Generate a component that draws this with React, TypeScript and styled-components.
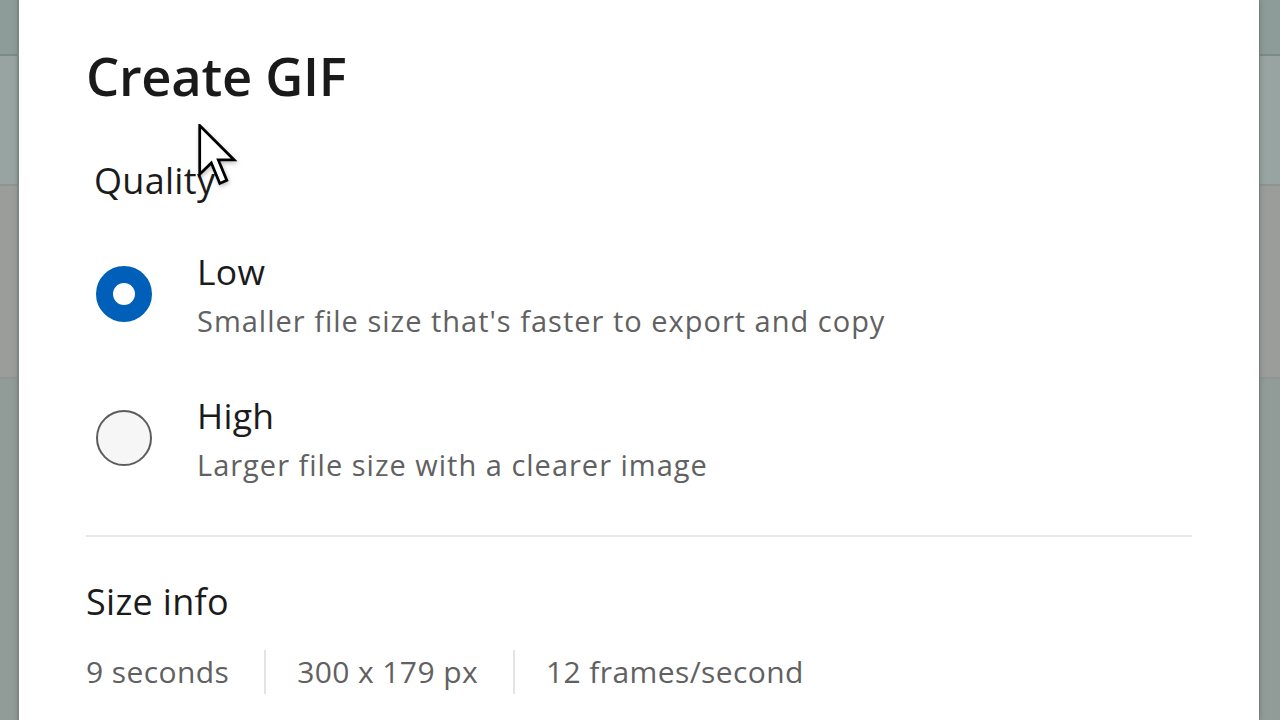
import React from "react";
import styled, { createGlobalStyle } from "styled-components";

const Global = createGlobalStyle`
  html, body { margin: 0; padding: 0; }
  body {
    width: 1280px;
    height: 720px;
    overflow: hidden;
    font-family: "Open Sans", "Noto Sans", "Liberation Sans", sans-serif;
  }
`;

const Page = styled.div`
  position: relative;
  width: 1280px;
  height: 720px;
  display: flex;
  padding: 0 21px 0 19px;
  box-sizing: border-box;
  background: linear-gradient(
    to bottom,
    #8e9c99 0px,
    #8e9c99 54px,
    #7f8a88 54px,
    #7f8a88 56px,
    #97a4a1 56px,
    #97a4a1 184px,
    #8c9593 184px,
    #8c9593 186px,
    #9b9d9b 186px,
    #9b9d9b 377px,
    #8f9593 377px,
    #8f9593 379px,
    #919b98 379px,
    #919b98 720px
  );
`;

const Dialog = styled.section`
  flex: 1;
  background: #ffffff;
  box-shadow: -2px 0 0 #7d8886, 1px 0 0 #7a7f7e, 0 0 6px rgba(0, 0, 0, 0.25);
  padding: 38px 67px 0 67px;
  display: flex;
  flex-direction: column;
  color: #1b1b1b;
`;

const Title = styled.h1`
  margin: 0;
  font-size: 52.5px;
  font-weight: 600;
  line-height: 76px;
  letter-spacing: -0.3px;
  color: #1a1a1a;
`;

const SectionLabel = styled.div<{ $indent?: number }>`
  font-size: 36px;
  font-weight: 400;
  line-height: 48px;
  letter-spacing: 0.3px;
  padding-left: ${(p) => p.$indent ?? 0}px;
  color: #1b1b1b;
`;

const QualityLabel = styled(SectionLabel)`
  margin-top: 43px;
`;

const Options = styled.div`
  display: flex;
  flex-direction: column;
  gap: 50px;
  margin-top: 42px;
`;

const Option = styled.label`
  display: flex;
  align-items: center;
  gap: 45px;
  padding-left: 10px;
`;

const Radio = styled.span<{ $checked?: boolean }>`
  flex: none;
  width: 56px;
  height: 56px;
  border-radius: 50%;
  box-sizing: border-box;
  ${(p) =>
    p.$checked
      ? `background: #ffffff; border: 17px solid #005fb8;`
      : `background: #f6f6f6; border: 2px solid #5c5c5c;`}
`;

const OptionText = styled.div`
  display: flex;
  flex-direction: column;
`;

const OptionTitle = styled.div`
  font-size: 35.5px;
  line-height: 48px;
  letter-spacing: 0.3px;
  color: #1b1b1b;
`;

const OptionDesc = styled.div`
  font-size: 29px;
  line-height: 40px;
  letter-spacing: 1px;
  color: #616161;
  margin-top: 6px;
`;

const Divider = styled.hr`
  margin: 50px 0 0 0;
  border: none;
  height: 2px;
  background: #e6e6e6;
`;

const SizeLabel = styled(SectionLabel)`
  margin-top: 41px;
`;

const InfoRow = styled.div`
  display: flex;
  align-items: center;
  margin-top: 24px;
`;

const InfoItem = styled.span`
  font-size: 30px;
  line-height: 44px;
  letter-spacing: 0.4px;
  color: #616161;
  padding: 0 35px 0 31px;
  border-left: 2px solid #e3e3e3;
  &:first-child {
    padding-left: 0;
    border-left: none;
  }
`;

const Cursor = styled.svg`
  position: absolute;
  left: 198px;
  top: 124px;
  pointer-events: none;
  filter: drop-shadow(1px 2px 2px rgba(0, 0, 0, 0.25));
`;

export default function App() {
  return (
    <>
      <Global />
      <Page>
        <Dialog>
          <Title>Create GIF</Title>
          <QualityLabel $indent={8}>Quality</QualityLabel>
          <Options>
            <Option>
              <Radio $checked />
              <OptionText>
                <OptionTitle>Low</OptionTitle>
                <OptionDesc>Smaller file size that's faster to export and copy</OptionDesc>
              </OptionText>
            </Option>
            <Option>
              <Radio />
              <OptionText>
                <OptionTitle>High</OptionTitle>
                <OptionDesc>Larger file size with a clearer image</OptionDesc>
              </OptionText>
            </Option>
          </Options>
          <Divider />
          <SizeLabel>Size info</SizeLabel>
          <InfoRow>
            <InfoItem>9 seconds</InfoItem>
            <InfoItem>300 x 179 px</InfoItem>
            <InfoItem>12 frames/second</InfoItem>
          </InfoRow>
        </Dialog>
        <Cursor width="40" height="64" viewBox="0 0 13 21">
          <path
            d="M0.5 0.5 L0.5 16.5 L4.3 12.8 L7.1 19.5 L9.4 18.5 L6.6 11.8 L11.8 11.8 Z"
            fill="#ffffff"
            stroke="#000000"
            strokeWidth="0.9"
            strokeLinejoin="miter"
          />
        </Cursor>
      </Page>
    </>
  );
}
